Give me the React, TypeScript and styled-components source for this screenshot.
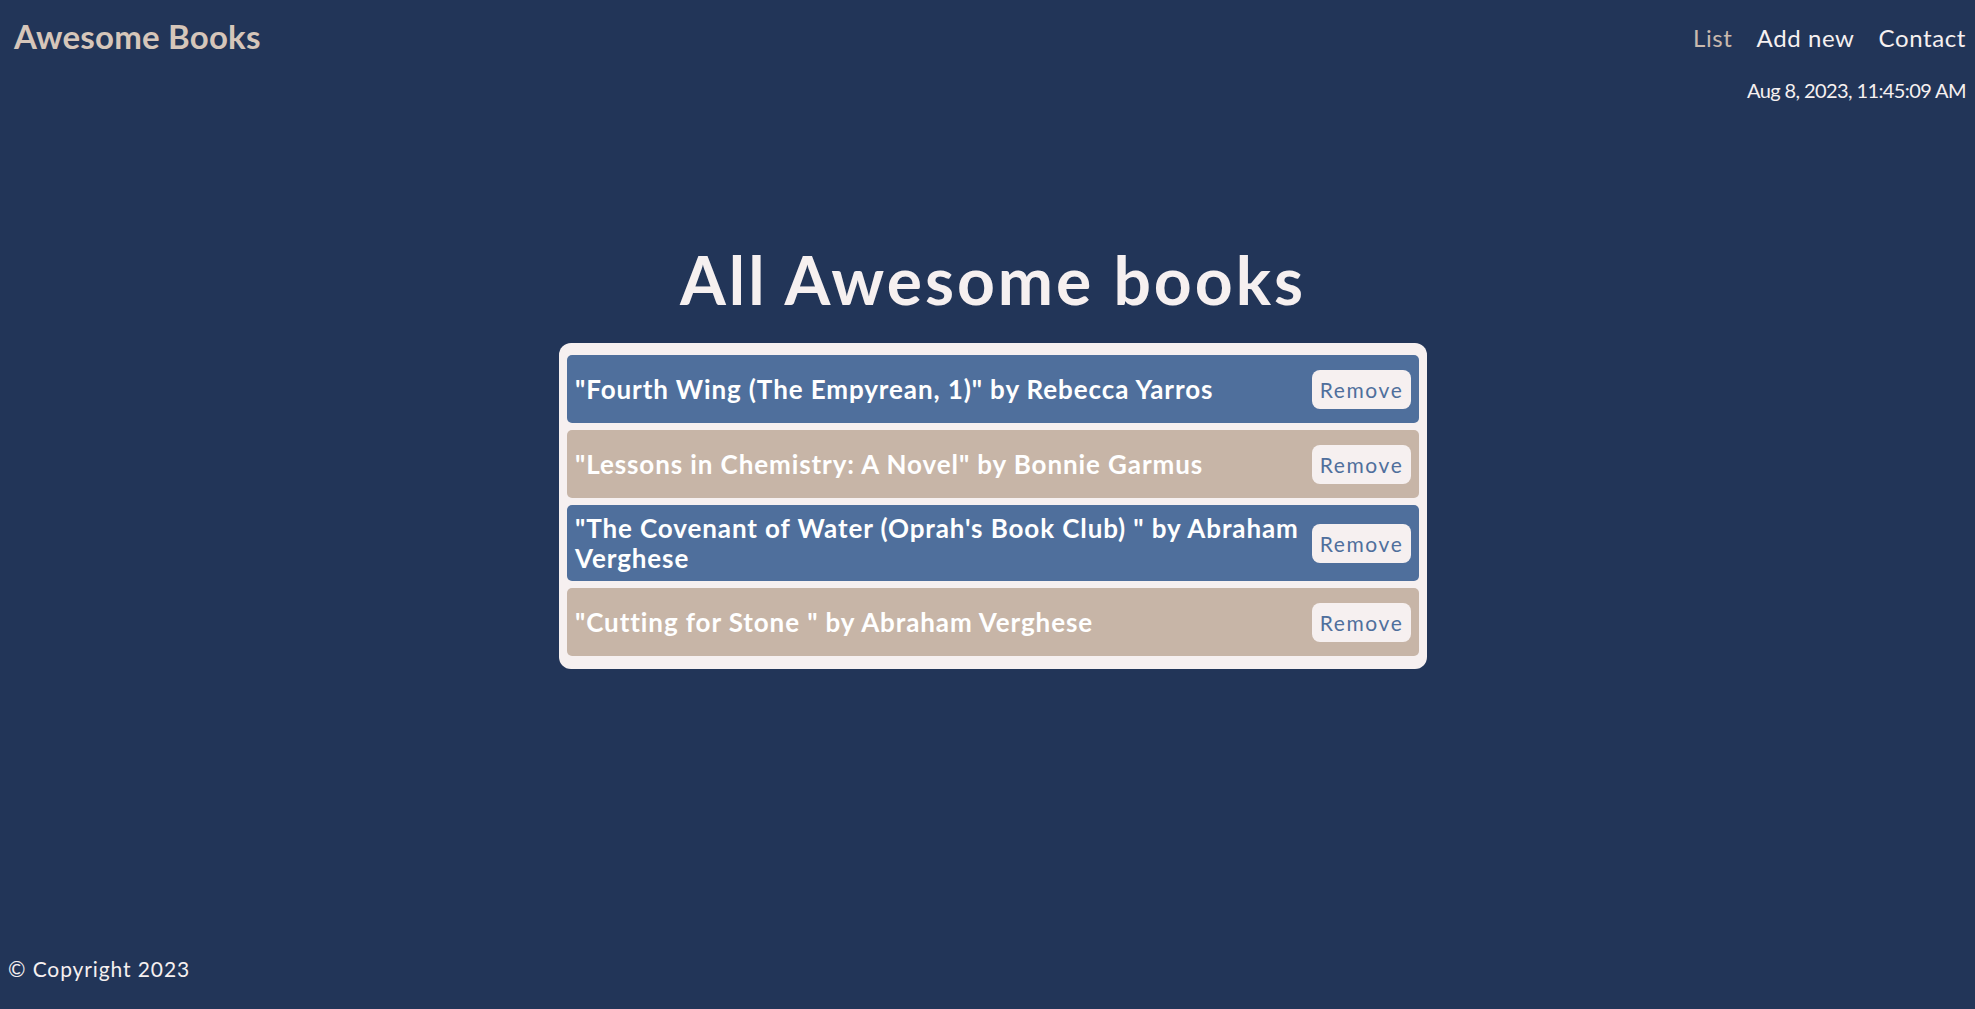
import React from "react";
import styled, { createGlobalStyle } from "styled-components";

const GlobalStyle = createGlobalStyle`
  * { box-sizing: border-box; }
  html, body { margin: 0; padding: 0; }
  body {
    background: #223558;
    font-family: Lato, "Open Sans", sans-serif;
    color: #f6f0f0;
  }
`;

const Page = styled.div`
  min-height: 100vh;
  display: flex;
  flex-direction: column;
`;

const Header = styled.header`
  display: flex;
  justify-content: space-between;
  align-items: flex-start;
  padding: 16px 9px 0 14px;
`;

const Brand = styled.h1`
  margin: 0;
  font-size: 33px;
  line-height: 40px;
  font-weight: 700;
  letter-spacing: 0.2px;
  color: #d6c6ba;
`;

const NavColumn = styled.div`
  display: flex;
  flex-direction: column;
  align-items: flex-end;
  margin-top: 7px;
`;

const NavList = styled.ul`
  list-style: none;
  margin: 0;
  padding: 0;
  display: flex;
  gap: 24px;
`;

const NavLink = styled.li<{ $active?: boolean }>`
  font-size: 24px;
  line-height: 29px;
  letter-spacing: 0.6px;
  color: ${(p) => (p.$active ? "#c9b9ae" : "#f6f0f0")};
  cursor: pointer;
`;

const DateText = styled.p`
  margin: 26px 0 0;
  font-size: 20px;
  line-height: 24px;
  letter-spacing: -0.6px;
  color: #f6f0f0;
`;

const Main = styled.main`
  flex: 1;
  display: flex;
  flex-direction: column;
  align-items: center;
  padding-top: 138px;
  padding-left: 11px;
`;

const Heading = styled.h2`
  margin: 0 0 24px;
  font-size: 66px;
  line-height: 79px;
  font-weight: 700;
  letter-spacing: 3px;
  color: #f6f0f0;
`;

const BookList = styled.ul`
  list-style: none;
  margin: 0;
  padding: 12px 8px 13px;
  width: 868px;
  background: #f6f0f0;
  border-radius: 12px;
  display: flex;
  flex-direction: column;
  gap: 7px;
`;

const BookRow = styled.li<{ $tone: "blue" | "tan" }>`
  display: flex;
  align-items: center;
  justify-content: space-between;
  gap: 12px;
  min-height: 68px;
  padding: 8px 8px;
  border-radius: 5px;
  background: ${(p) => (p.$tone === "blue" ? "#4f6f9c" : "#c7b5a7")};
`;

const BookTitle = styled.p`
  margin: 0;
  font-size: 26px;
  line-height: 30px;
  font-weight: 700;
  letter-spacing: 0.9px;
  color: #ffffff;
`;

const RemoveButton = styled.button`
  flex-shrink: 0;
  width: 99px;
  height: 39px;
  padding: 0;
  border: none;
  border-radius: 8px;
  background: #f6f0f0;
  color: #4f6f9c;
  font-family: Lato, "Open Sans", sans-serif;
  font-size: 21px;
  letter-spacing: 1.6px;
  cursor: pointer;
`;

const Footer = styled.footer`
  padding: 0 8px 28px;
  font-size: 21px;
  line-height: 25px;
  letter-spacing: 0.9px;
  color: #f6f0f0;
`;

const books = [
  { title: "\"Fourth Wing (The Empyrean, 1)\" by Rebecca Yarros" },
  { title: "\"Lessons in Chemistry: A Novel\" by Bonnie Garmus" },
  { title: "\"The Covenant of Water (Oprah's Book Club) \" by Abraham Verghese" },
  { title: "\"Cutting for Stone \" by Abraham Verghese" },
];

export default function App() {
  return (
    <>
      <GlobalStyle />
      <Page>
        <Header>
          <Brand>Awesome Books</Brand>
          <NavColumn>
            <NavList>
              <NavLink $active>List</NavLink>
              <NavLink>Add new</NavLink>
              <NavLink>Contact</NavLink>
            </NavList>
            <DateText>Aug 8, 2023, 11:45:09 AM</DateText>
          </NavColumn>
        </Header>
        <Main>
          <Heading>All Awesome books</Heading>
          <BookList>
            {books.map((b, i) => (
              <BookRow key={i} $tone={i % 2 === 0 ? "blue" : "tan"}>
                <BookTitle>{b.title}</BookTitle>
                <RemoveButton>Remove</RemoveButton>
              </BookRow>
            ))}
          </BookList>
        </Main>
        <Footer>© Copyright 2023</Footer>
      </Page>
    </>
  );
}
